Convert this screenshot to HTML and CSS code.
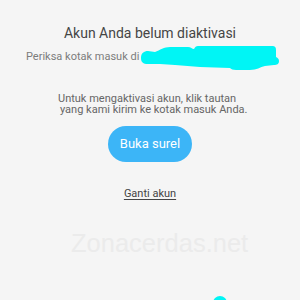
FILE: index.html
```html
<!DOCTYPE html>
<html lang="id">
<head>
<meta charset="utf-8">
<title>Akun Anda belum diaktivasi</title>
<link rel="stylesheet" href="styles.css">
</head>
<body>
<main class="screen">
  <h1 class="title">Akun Anda belum diaktivasi</h1>
  <div class="check-row">
    <span class="check-text">Periksa kotak masuk di</span>
    <svg class="redact" width="141" height="27" viewBox="0 0 141 27" aria-hidden="true">
      <path d="M1,13 C1,8 4,6 8,6 L15,7 C20,5 24,2 30,2 L48,2 C51,2 52,4 54,4 C55,2 56,1 58,1 L132,1 C135,1 136,2 136,5 L136,12 C138,13 139,14 139,16 C139,19 137,20 134,20 L125,21 C120,22 117,25 110,25 L96,25 C93,25 91,24 90,23 L60,22 L35,20 L20,19 L8,19 C3,19 1,17 1,13 Z" fill="#00f5f5"/>
    </svg>
  </div>
  <p class="info">
    <span class="info-line">Untuk mengaktivasi akun, klik tautan</span>
    <span class="info-line info-line-2">yang kami kirim ke kotak masuk Anda.</span>
  </p>
  <button class="open-btn" type="button">Buka surel</button>
  <a class="switch-link" href="#">Ganti akun</a>
</main>
<div class="watermark">Zonacerdas.net</div>
<div class="dot"></div>
</body>
</html>
```

FILE: styles.css
```css
html, body {
  margin: 0;
  padding: 0;
  width: 300px;
  height: 300px;
  overflow: hidden;
  background: #f5f5f5;
}

body {
  position: relative;
  font-family: Roboto, "Noto Sans", sans-serif;
}

.screen {
  display: flex;
  flex-direction: column;
  align-items: center;
  padding-top: 25px;
}

.title {
  margin: 0;
  font-size: 14px;
  line-height: 16px;
  font-weight: 400;
  color: #454545;
}

.check-row {
  position: relative;
  align-self: stretch;
  margin-top: 9px;
  padding-left: 26px;
  font-size: 11px;
  line-height: 13px;
  color: #7c7c7c;
}

.redact {
  position: absolute;
  left: 140px;
  top: -5px;
}

.info {
  align-self: stretch;
  margin: 29.5px 0 0 0;
  padding-left: 58px;
  font-size: 11px;
  line-height: 11.5px;
  color: #666666;
}

.info-line {
  display: block;
}

.info-line-2 {
  padding-left: 2px;
}

.open-btn {
  margin-top: 10.5px;
  width: 84px;
  height: 36px;
  border: none;
  border-radius: 18px;
  background: #3cb5f7;
  color: #ffffff;
  font-family: Roboto, "Noto Sans", sans-serif;
  font-size: 13px;
  line-height: 36px;
  padding: 0;
}

.switch-link {
  margin-top: 25px;
  font-size: 11px;
  line-height: 13px;
  color: #444444;
  text-decoration: underline;
  text-underline-offset: 1.5px;
}

.watermark {
  position: absolute;
  left: 71px;
  top: 228px;
  font-family: "Liberation Sans", Arial, sans-serif;
  font-size: 25.5px;
  line-height: 30px;
  color: #ebebeb;
  white-space: nowrap;
}

.dot {
  position: absolute;
  left: 213px;
  top: 296px;
  width: 14px;
  height: 14px;
  border-radius: 50%;
  background: #00f5f5;
}
```
